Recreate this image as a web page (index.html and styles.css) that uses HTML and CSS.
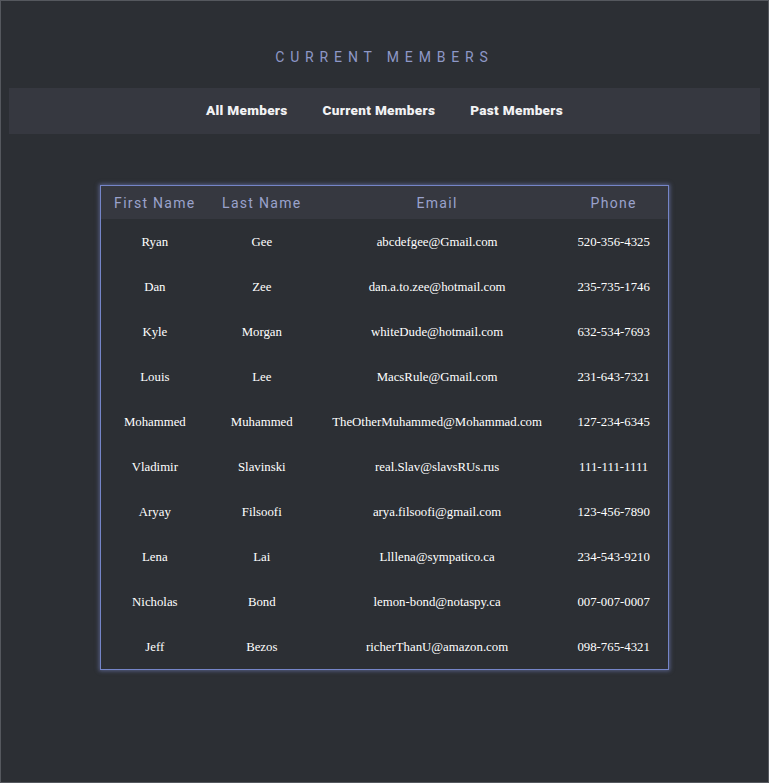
FILE: index.html
```html
<!DOCTYPE html>
<html>
<head>
<meta charset="utf-8">
<link rel="stylesheet" href="styles.css">
</head>
<body>
<div class="page">
  <h1 class="title">CURRENT MEMBERS</h1>
  <nav class="nav">
    <a class="nav-link">All Members</a>
    <a class="nav-link">Current Members</a>
    <a class="nav-link">Past Members</a>
  </nav>
  <div class="table-wrap">
    <table class="members">
      <colgroup>
        <col class="c-first"><col class="c-last"><col class="c-email"><col class="c-phone">
      </colgroup>
      <thead>
        <tr><th>First Name</th><th>Last Name</th><th>Email</th><th>Phone</th></tr>
      </thead>
      <tbody>
        <tr><td>Ryan</td><td>Gee</td><td>abcdefgee@Gmail.com</td><td>520-356-4325</td></tr>
        <tr><td>Dan</td><td>Zee</td><td>dan.a.to.zee@hotmail.com</td><td>235-735-1746</td></tr>
        <tr><td>Kyle</td><td>Morgan</td><td>whiteDude@hotmail.com</td><td>632-534-7693</td></tr>
        <tr><td>Louis</td><td>Lee</td><td>MacsRule@Gmail.com</td><td>231-643-7321</td></tr>
        <tr><td>Mohammed</td><td>Muhammed</td><td>TheOtherMuhammed@Mohammad.com</td><td>127-234-6345</td></tr>
        <tr><td>Vladimir</td><td>Slavinski</td><td>real.Slav@slavsRUs.rus</td><td>111-111-1111</td></tr>
        <tr><td>Aryay</td><td>Filsoofi</td><td>arya.filsoofi@gmail.com</td><td>123-456-7890</td></tr>
        <tr><td>Lena</td><td>Lai</td><td>Llllena@sympatico.ca</td><td>234-543-9210</td></tr>
        <tr><td>Nicholas</td><td>Bond</td><td>lemon-bond@notaspy.ca</td><td>007-007-0007</td></tr>
        <tr><td>Jeff</td><td>Bezos</td><td>richerThanU@amazon.com</td><td>098-765-4321</td></tr>
      </tbody>
    </table>
  </div>
</div>
</body>
</html>
```

FILE: styles.css
```css
html, body {
  margin: 0;
  padding: 0;
  background: #2c2f34;
}

.page {
  box-sizing: border-box;
  min-height: 783px;
  border: 1px solid #55585e;
  padding: 0 8px;
}

.title {
  margin: 0;
  padding-top: 48px;
  height: 39px;
  box-sizing: content-box;
  font-family: Roboto, sans-serif;
  font-weight: 400;
  font-size: 14px;
  line-height: 17px;
  letter-spacing: 5.85px;
  text-align: center;
  color: #8e98c8;
}

.nav {
  background: #363840;
  height: 46px;
  display: flex;
  justify-content: center;
  align-items: center;
  gap: 35px;
}

.nav-link {
  font-family: Roboto, sans-serif;
  font-weight: 900;
  font-size: 13.6px;
  line-height: 16px;
  color: #f2f2f4;
  letter-spacing: 0.3px;
  margin-top: -3px;
}

.table-wrap {
  display: flex;
  justify-content: center;
  padding-top: 51px;
}

.members {
  border-collapse: collapse;
  table-layout: fixed;
  width: 569px;
  border: 1px solid #7585c8;
  box-shadow: 0 0 4px 1px rgba(120, 135, 200, 0.55);
}

.c-first { width: 108px; }
.c-last { width: 106px; }
.c-email { width: 244px; }
.c-phone { width: 109px; }

.members thead tr {
  background: #363840;
}

.members th {
  height: 33px;
  padding: 0;
  font-family: Roboto, sans-serif;
  font-weight: 400;
  font-size: 14px;
  letter-spacing: 1.3px;
  color: #9aa2cc;
  text-align: center;
}

.members td {
  height: 43px;
  padding: 2px 0 0;
  font-family: "Liberation Serif", serif;
  font-size: 12.8px;
  color: #ffffff;
  text-align: center;
}
```
